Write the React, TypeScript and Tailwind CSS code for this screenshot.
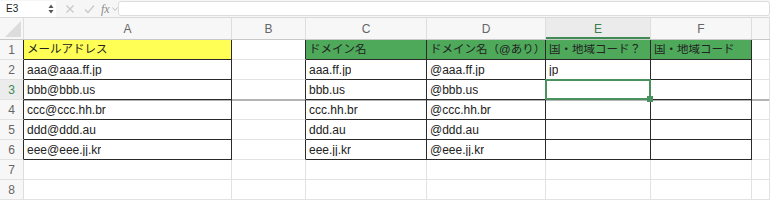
import React from "react";

const font = { fontFamily: '"Liberation Sans", "Noto Sans CJK JP", sans-serif' };

const cols = ["A", "B", "C", "D", "E", "F", ""];

type Cell = { t?: string; bg?: string; dark?: boolean; jp?: boolean };

const data: Cell[][] = [
  [
    { t: "メールアドレス", bg: "bg-[#ffff55]", dark: true, jp: true },
    {},
    { t: "ドメイン名", bg: "bg-[#4ea95b]", dark: true, jp: true },
    { t: "ドメイン名（@あり）", bg: "bg-[#4ea95b]", dark: true, jp: true },
    { t: "国・地域コード？", bg: "bg-[#4ea95b]", dark: true, jp: true },
    { t: "国・地域コード", bg: "bg-[#4ea95b]", dark: true, jp: true },
    {},
  ],
  [
    { t: "aaa@aaa.ff.jp", dark: true },
    {},
    { t: "aaa.ff.jp", dark: true },
    { t: "@aaa.ff.jp", dark: true },
    { t: "jp", dark: true },
    { dark: true },
    {},
  ],
  [
    { t: "bbb@bbb.us", dark: true },
    {},
    { t: "bbb.us", dark: true },
    { t: "@bbb.us", dark: true },
    { dark: true },
    { dark: true },
    {},
  ],
  [
    { t: "ccc@ccc.hh.br", dark: true },
    {},
    { t: "ccc.hh.br", dark: true },
    { t: "@ccc.hh.br", dark: true },
    { dark: true },
    { dark: true },
    {},
  ],
  [
    { t: "ddd@ddd.au", dark: true },
    {},
    { t: "ddd.au", dark: true },
    { t: "@ddd.au", dark: true },
    { dark: true },
    { dark: true },
    {},
  ],
  [
    { t: "eee@eee.jj.kr", dark: true },
    {},
    { t: "eee.jj.kr", dark: true },
    { t: "@eee.jj.kr", dark: true },
    { dark: true },
    { dark: true },
    {},
  ],
  [{}, {}, {}, {}, {}, {}, {}],
  [{}, {}, {}, {}, {}, {}, {}],
];

const grid = "grid grid-cols-[24px_208px_74px_121px_119px_105px_101px_1fr]";

export default function App() {
  return (
    <div className="relative w-[770px] h-[200px] overflow-hidden bg-white text-[#222]" style={font}>
      {/* formula bar */}
      <div className="flex h-[18px] items-center border-b border-[#d9d9d9] bg-[#f6f6f6]">
        <div className="flex h-[16px] w-[56px] items-center justify-between bg-white pl-[6px] pr-[2px] text-[10px] text-[#222]">
          <span>E3</span>
          <svg width="6" height="12" viewBox="0 0 6 12">
            <path d="M0.5 5 L3 1.5 L5.5 5 Z" fill="#555" />
            <path d="M0.5 7 L3 10.5 L5.5 7 Z" fill="#555" />
          </svg>
        </div>
        <div className="flex w-[62px] items-center pl-[8px]">
          <svg width="10" height="10" viewBox="0 0 10 10" className="ml-[1px]">
            <path d="M1.5 1.5 L8.5 8.5 M8.5 1.5 L1.5 8.5" stroke="#c8c8c8" strokeWidth="1.2" />
          </svg>
          <svg width="11" height="10" viewBox="0 0 11 10" className="ml-[9px]">
            <path d="M1 5.5 L4 8.5 L10 1.5" stroke="#c8c8c8" strokeWidth="1.2" fill="none" />
          </svg>
          <span className="ml-[6px] text-[12px] italic text-[#8a8a8a]" style={{ fontFamily: '"Liberation Serif", serif' }}>
            fx
          </span>
          <svg width="6" height="6" viewBox="0 0 6 6" className="ml-[2px]">
            <path d="M0.5 1.5 L3 4.5 L5.5 1.5" stroke="#b0b0b0" strokeWidth="0.8" fill="none" />
          </svg>
        </div>
        <div className="h-[15px] flex-1 rounded-[3px] border border-[#dcdcdc] bg-white" />
      </div>

      {/* column headers */}
      <div className={`${grid} h-[22px] border-b border-[#c8c8c8] bg-[#f7f7f7]`}>
        <div className="relative overflow-hidden border-r border-[#dedede]">
          <svg width="24" height="21" viewBox="0 0 24 21" className="block">
            <path d="M21 3 L21 19 L5 19 Z" fill="#dcdcdc" />
          </svg>
        </div>
        {cols.map((c, i) => (
          <div
            key={i}
            className={`flex items-center justify-center border-r border-[#dedede] text-[12px] ${
              c === "E" ? "bg-[#ebebeb] text-[#3b7d4c] shadow-[inset_0_-2px_0_#3f8a55]" : "text-[#666]"
            }`}
          >
            {c}
          </div>
        ))}
      </div>

      {/* rows */}
      {data.map((row, r) => (
        <div key={r} className={`${grid} h-[20px]`}>
          <div
            className={`flex items-center justify-center border-b border-[#e2e2e2] text-[12px] ${
              r < 6 ? "border-r border-r-[#2a2a2a]" : "border-r border-r-[#dedede]"
            } ${r === 2 ? "bg-[#ececec] text-[#3b8a52]" : "bg-[#f7f7f7] text-[#666]"}`}
          >
            {r + 1}
          </div>
          {row.map((cell, c) => {
            const nextDark = row[c + 1]?.dark;
            const rightDark = cell.dark || nextDark;
            const bottomDark = cell.dark;
            const freeze = r === 2;
            const selected = r === 2 && c === 4;
            return (
              <div
                key={c}
                className={`relative flex min-w-0 items-center whitespace-nowrap pl-[3px] ${
                  cell.jp ? "text-[11.5px]" : "text-[12px]"
                } ${cell.bg ?? ""} border-r ${rightDark ? "border-r-[#2a2a2a]" : "border-r-[#e2e2e2]"} border-b ${
                  bottomDark ? "border-b-[#2a2a2a]" : freeze ? "border-b-[#b4b4b4]" : "border-b-[#e2e2e2]"
                } ${freeze ? "shadow-[0_1px_0_#b4b4b4]" : ""} ${selected ? "z-10" : ""}`}
              >
                <span className="block overflow-hidden leading-none">{cell.t}</span>
                {selected && (
                  <div className="pointer-events-none absolute inset-[-1px] border-2 border-[#4a9160]">
                    <div className="absolute bottom-[-4px] right-[-4px] h-[6px] w-[6px] bg-[#4a9160]" />
                  </div>
                )}
              </div>
            );
          })}
        </div>
      ))}
    </div>
  );
}
